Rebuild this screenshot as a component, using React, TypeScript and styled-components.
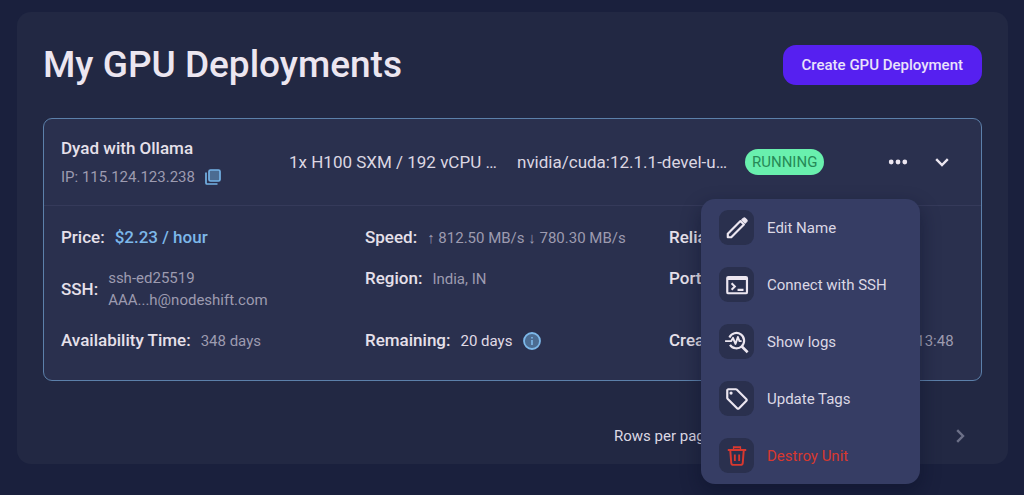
import React from "react";
import styled, { createGlobalStyle } from "styled-components";

const GlobalStyle = createGlobalStyle`
  *, *::before, *::after { box-sizing: border-box; }
  body {
    margin: 0;
    background: #1a203d;
    color: #e6e0ea;
    font-family: Roboto, "Liberation Sans", sans-serif;
    font-size: 15px;
    line-height: 22px;
  }
  h1, h2, ul, dl, dt, dd { margin: 0; padding: 0; }
  ul { list-style: none; }
  button { font: inherit; color: inherit; cursor: pointer; border: 0; background: none; padding: 0; }
`;

const Page = styled.div`
  padding: 12px 16px 31px 17px;
`;

const Panel = styled.main`
  padding: 28px 26px 12px;
  border-radius: 14px;
  background: #222843;
`;

const PageHeader = styled.header`
  display: flex;
  align-items: center;
  justify-content: space-between;
  padding-bottom: 28px;
`;

const Title = styled.h1`
  font-size: 37px;
  font-weight: 500;
  line-height: 50px;
  color: #ece6f0;
`;

const CreateButton = styled.button`
  height: 40px;
  padding: 0 19px;
  border-radius: 13px;
  background: #5620f0;
  color: #e9e2fb;
  font-weight: 500;
`;

const Card = styled.article`
  border: 1px solid #5c80aa;
  border-radius: 9px;
  background: #2a304e;
`;

const CardHeader = styled.div`
  display: grid;
  grid-template-columns: repeat(4, minmax(0, 1fr));
  align-items: center;
  height: 87px;
  padding: 0 8px 0 17px;
  border-bottom: 1px solid #353a5a;
`;

const Unit = styled.div`
  padding-top: 2px;
`;

const UnitName = styled.h2`
  font-size: 17px;
  font-weight: 500;
  line-height: 28px;
`;

const UnitIp = styled.div`
  display: flex;
  align-items: center;
  gap: 10px;
  line-height: 30px;
  color: #9d9bb0;
`;

const CopyButton = styled.button`
  display: flex;
`;

const Summary = styled.div`
  padding-right: 8px;
  font-size: 17px;
  line-height: 24px;
  white-space: nowrap;
  color: #dcd7e2;
`;

const StatusCell = styled.div`
  position: relative;
  display: flex;
  align-items: center;
  justify-content: space-between;
`;

const Status = styled.span`
  padding: 2px 7px;
  border-radius: 13px;
  background: #69f0ae;
  color: #268a57;
`;

const Actions = styled.div`
  display: flex;
  gap: 20px;
  padding-right: 19px;
`;

const IconButton = styled.button`
  display: flex;
  color: #ece6f0;
`;

const Menu = styled.ul`
  position: absolute;
  top: 50px;
  right: 53px;
  z-index: 1;
  width: 219px;
  border-radius: 14px;
  background: #363d64;
  box-shadow: 0 8px 18px 2px rgba(10, 14, 40, 0.4);
`;

const MenuItem = styled.button<{ $danger?: boolean }>`
  display: flex;
  align-items: center;
  gap: 13px;
  width: 100%;
  height: 57px;
  padding: 0 18px;
  text-align: left;
  color: ${(p) => (p.$danger ? "#d8382f" : "#dcd8e4")};
`;

const MenuIcon = styled.span<{ $danger?: boolean }>`
  display: flex;
  align-items: center;
  justify-content: center;
  width: 35px;
  height: 35px;
  border-radius: 9px;
  background: #2a304e;
  color: ${(p) => (p.$danger ? "#d8382f" : "#ece6f0")};
`;

const Details = styled.dl`
  display: grid;
  grid-template-columns: repeat(3, minmax(0, 1fr));
  row-gap: 18px;
  padding: 20px 8px 28px 17px;
`;

const Detail = styled.div`
  display: flex;
  align-items: baseline;
  gap: 10px;
  white-space: nowrap;
`;

const StackedDetail = styled(Detail)`
  align-items: center;
`;

const Term = styled.dt`
  font-size: 17px;
  font-weight: 500;
`;

const Value = styled.dd<{ $tone?: "bright" | "accent" }>`
  display: flex;
  align-items: center;
  gap: 11px;
  font-size: ${(p) => (p.$tone === "accent" ? 17 : 15)}px;
  font-weight: ${(p) => (p.$tone === "accent" ? 500 : 400)};
  color: ${(p) =>
    p.$tone === "accent" ? "#7db8ea" : p.$tone === "bright" ? "#e0dbe6" : "#9d9bb0"};
`;

const Pagination = styled.footer`
  display: flex;
  align-items: center;
  justify-content: space-between;
  padding: 43px 10px 4px 571px;
  color: #dcd8e4;
`;

const NextButton = styled(IconButton)`
  color: #6c7088;
`;

function CopyIcon() {
  return (
    <svg width="16" height="16" viewBox="0 0 16 16" fill="none" aria-hidden="true">
      <rect x="4" y="1" width="11" height="11" rx="1.5" fill="#4c6c92" stroke="#74b2e6" strokeWidth="1.7" />
      <path d="M1 3.500V14a1 1 0 0 0 1 1h10.500" stroke="#74b2e6" strokeWidth="1.7" />
    </svg>
  );
}

function InfoIcon() {
  return (
    <svg width="18" height="18" viewBox="0 0 18 18" fill="none" aria-hidden="true">
      <circle cx="9" cy="9" r="8" fill="#4c6c92" stroke="#7db8ea" strokeWidth="1.8" />
      <path d="M9 8v5M9 5v1.500" stroke="#7db8ea" strokeWidth="1.6" />
    </svg>
  );
}

function DotsIcon() {
  return (
    <svg width="24" height="24" viewBox="0 0 24 24" fill="currentColor" aria-hidden="true">
      <circle cx="5.200" cy="12" r="2.400" />
      <circle cx="12" cy="12" r="2.400" />
      <circle cx="18.800" cy="12" r="2.400" />
    </svg>
  );
}

function ChevronIcon({ direction }: { direction: "down" | "right" }) {
  return (
    <svg width="24" height="24" viewBox="0 0 24 24" fill="none" stroke="currentColor" strokeWidth="2.400" aria-hidden="true">
      <path d={direction === "down" ? "M6.200 9.200 12 15l5.800-5.800" : "M9.200 6.200 15 12l-5.800 5.800"} />
    </svg>
  );
}

const glyph = { width: 26, height: 26, viewBox: "0 0 24 24", "aria-hidden": true } as const;

function PencilIcon() {
  return (
    <svg {...glyph} fill="none" stroke="currentColor" strokeWidth="2" strokeLinejoin="round">
      <path d="M3.500 20.500v-3.200L15.200 5.600l3.200 3.200L6.700 20.500z" />
      <path d="m16.400 4.400 1.600-1.500a1 1 0 0 1 1.400 0l1.700 1.700a1 1 0 0 1 0 1.400l-1.500 1.600z" fill="currentColor" strokeWidth="1" />
    </svg>
  );
}

function TerminalIcon() {
  return (
    <svg {...glyph} fill="none" stroke="currentColor" strokeWidth="2">
      <rect x="3" y="4.600" width="18.200" height="15" rx="1" />
      <path d="M3 6h18.200" strokeWidth="2.800" />
      <path d="m7 10.300 3 3-3 3M12.500 16.500h5.500" strokeWidth="1.900" />
    </svg>
  );
}

function LogsIcon() {
  return (
    <svg {...glyph} fill="none" stroke="currentColor" strokeWidth="2">
      <path d="M5 7.800A7.100 7.100 0 1 1 5.500 14.600" />
      <path d="m16 15.700 5.800 5.800" strokeWidth="2.400" />
      <path d="M1 11.200h5.500l1.800-3 2.300 5.600 2.200-6.400 1.500 3.800h2" strokeWidth="1.800" strokeLinejoin="round" />
    </svg>
  );
}

function TagIcon() {
  return (
    <svg {...glyph} fill="currentColor">
      <path d="m21.410 11.580-9-9C12.050 2.220 11.550 2 11 2H4c-1.100 0-2 .9-2 2v7c0 .55.220 1.050.590 1.420l9 9c.360.360.860.580 1.410.580s1.050-.220 1.410-.590l7-7c.370-.360.590-.860.590-1.410s-.230-1.060-.590-1.420zM13 20.010 4 11V4h7v-.010l9 9-7 7.020z" />
      <circle cx="6.500" cy="6.500" r="1.500" />
    </svg>
  );
}

function TrashIcon() {
  return (
    <svg {...glyph} fill="none" stroke="currentColor" strokeWidth="1.800">
      <path d="M3.500 6.500h17M8.500 4h7" />
      <path d="M8.800 3.200v3M15.200 3.200v3" strokeWidth="1.200" />
      <path d="m5.800 7 .9 11.500a2 2 0 0 0 2 1.700h6.600a2 2 0 0 0 2-1.700L18.200 7" />
      <path d="M10 10.500v6M14 10.500v6" strokeWidth="1.700" />
    </svg>
  );
}

const menuItems = [
  { label: "Edit Name", icon: <PencilIcon /> },
  { label: "Connect with SSH", icon: <TerminalIcon /> },
  { label: "Show logs", icon: <LogsIcon /> },
  { label: "Update Tags", icon: <TagIcon /> },
  { label: "Destroy Unit", icon: <TrashIcon />, danger: true },
];

export default function App() {
  return (
    <>
      <GlobalStyle />
      <Page>
        <Panel>
          <PageHeader>
            <Title>My GPU Deployments</Title>
            <CreateButton type="button">Create GPU Deployment</CreateButton>
          </PageHeader>

          <Card>
            <CardHeader>
              <Unit>
                <UnitName>Dyad with Ollama</UnitName>
                <UnitIp>
                  IP: 115.124.123.238
                  <CopyButton type="button" aria-label="Copy IP address">
                    <CopyIcon />
                  </CopyButton>
                </UnitIp>
              </Unit>
              <Summary>1x H100 SXM / 192 vCPU …</Summary>
              <Summary>nvidia/cuda:12.1.1-devel-u…</Summary>
              <StatusCell>
                <Status>RUNNING</Status>
                <Actions>
                  <IconButton type="button" aria-label="Unit actions" aria-expanded="true">
                    <DotsIcon />
                  </IconButton>
                  <IconButton type="button" aria-label="Collapse details">
                    <ChevronIcon direction="down" />
                  </IconButton>
                </Actions>
                <Menu>
                  {menuItems.map((item) => (
                    <li key={item.label}>
                      <MenuItem type="button" $danger={item.danger}>
                        <MenuIcon $danger={item.danger}>{item.icon}</MenuIcon>
                        {item.label}
                      </MenuItem>
                    </li>
                  ))}
                </Menu>
              </StatusCell>
            </CardHeader>

            <Details>
              <Detail>
                <Term>Price:</Term>
                <Value $tone="accent">$2.23 / hour</Value>
              </Detail>
              <Detail>
                <Term>Speed:</Term>
                <Value>↑ 812.50 MB/s ↓ 780.30 MB/s</Value>
              </Detail>
              <Detail>
                <Term>Reliability:</Term>
              </Detail>
              <StackedDetail>
                <Term>SSH:</Term>
                <Value>
                  <span>
                    ssh-ed25519
                    <br />
                    AAA...h@nodeshift.com
                  </span>
                </Value>
              </StackedDetail>
              <Detail>
                <Term>Region:</Term>
                <Value>India, IN</Value>
              </Detail>
              <Detail>
                <Term>Ports:</Term>
              </Detail>
              <Detail>
                <Term>Availability Time:</Term>
                <Value>348 days</Value>
              </Detail>
              <Detail>
                <Term>Remaining:</Term>
                <Value $tone="bright">
                  20 days <InfoIcon />
                </Value>
              </Detail>
              <Detail>
                <Term>Creation Time:</Term>
                <Value>February 11, 2025, 13:48</Value>
              </Detail>
            </Details>
          </Card>

          <Pagination>
            <span>Rows per page:</span>
            <NextButton type="button" aria-label="Next page">
              <ChevronIcon direction="right" />
            </NextButton>
          </Pagination>
        </Panel>
      </Page>
    </>
  );
}
